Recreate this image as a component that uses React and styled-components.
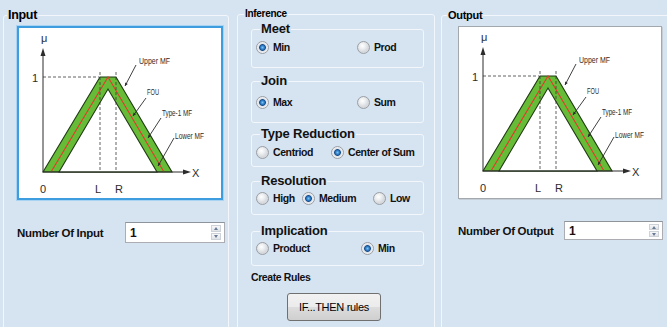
import React from 'react';
import styled, { createGlobalStyle } from 'styled-components';

const GlobalStyle = createGlobalStyle`
  html, body {
    margin: 0;
    padding: 0;
    background: #ffffff;
  }
  body {
    font-family: "Liberation Sans", Arial, sans-serif;
    color: #000;
  }
`;

const Form = styled.div`
  box-sizing: border-box;
  width: 667px;
  height: 327px;
  padding-left: 3px;
  background: #d6e4f2;
  overflow: hidden;
  display: flex;
  align-items: flex-start;
`;

const Group = styled.fieldset`
  box-sizing: border-box;
  flex-shrink: 0;
  width: ${p => p.$w}px;
  height: 400px;
  margin: 7px 0 0 ${p => p.$left || 0}px;
  padding: 0;
  min-width: 0;
  border: 1px solid #f3f7fb;
  border-radius: 3px;
`;

const Legend = styled.legend`
  margin-left: ${p => p.$ml}px;
  padding: 0 1px;
  font-size: ${p => p.$size}px;
  line-height: ${p => p.$lh}px;
  font-weight: bold;
  letter-spacing: -0.3px;
`;

const GroupBody = styled.div`
  padding: ${p => p.$top}px 0 0 ${p => p.$left}px;
  display: flex;
  flex-direction: column;
  align-items: flex-start;
`;

const Picture = styled.div`
  box-sizing: border-box;
  width: ${p => p.$w}px;
  height: ${p => p.$h}px;
  background: #ffffff;
  border: ${p => (p.$focused ? '2px solid #3e9ddf' : '1px solid #a3a8ae')};
  box-shadow: ${p => (p.$focused ? '0 0 0 1px #a9d3f2' : '1px 1px 0 #c4ccd6')};

  svg {
    display: block;
  }
`;

const NumberRow = styled.div`
  display: flex;
  align-items: center;
  margin-top: 22px;
`;

const NumberLabel = styled.span`
  width: ${p => p.$w}px;
  font-size: 11.5px;
  font-weight: bold;
  letter-spacing: -0.3px;
  color: #111;
`;

const Spinner = styled.div`
  box-sizing: border-box;
  width: ${p => p.$w}px;
  height: ${p => p.$h}px;
  display: flex;
  align-items: stretch;
  background: #ffffff;
  border: 1px solid #abadb3;
  border-top-color: #8f949b;
`;

const SpinValue = styled.span`
  flex: 1;
  display: flex;
  align-items: center;
  padding-left: 4px;
  font-size: 12px;
  font-weight: bold;
  color: #1a1010;
`;

const SpinButtons = styled.div`
  width: 10px;
  margin: 2px 3px 2px 0;
  display: flex;
  flex-direction: column;
  gap: 1px;
`;

const SpinButton = styled.span`
  flex: 1;
  display: flex;
  align-items: center;
  justify-content: center;
  background: linear-gradient(#f7f8f9, #dfe3e8);
  border: 1px solid #cdd2d8;

  &::after {
    content: '';
    border-left: 2.5px solid transparent;
    border-right: 2.5px solid transparent;
    ${p => (p.$down ? 'border-top: 3px solid #6a7a95;' : 'border-bottom: 3px solid #6a7a95;')}
  }
`;

const SubGroup = styled.fieldset`
  box-sizing: border-box;
  width: 173px;
  height: ${p => p.$h}px;
  margin: ${p => p.$mt}px 0 0 0;
  padding: 0 0 0 4px;
  min-width: 0;
  border: 1px solid #f3f7fb;
  border-radius: 3px;
`;

const SubLegend = styled.legend`
  margin-left: 4px;
  padding: 0 1px;
  font-size: 13px;
  line-height: 14px;
  font-weight: bold;
  letter-spacing: -0.2px;
  color: #111;
`;

const RadioRow = styled.div`
  display: flex;
  align-items: center;
  height: 18px;
  margin-top: ${p => p.$mt}px;
`;

const RadioItem = styled.label`
  display: flex;
  align-items: center;
  gap: 4px;
  width: ${p => (p.$w ? `${p.$w}px` : 'auto')};
  font-size: 10.5px;
  font-weight: bold;
  letter-spacing: -0.4px;
  color: #111;
`;

const RadioDot = styled.span`
  box-sizing: border-box;
  width: 13px;
  height: 13px;
  border-radius: 50%;
  border: 1px solid #9a9ea3;
  background: ${p =>
    p.$checked
      ? 'radial-gradient(circle, #7cc4f2 0, #2a79c4 2px, #1b4f8a 3px, #dfe3e8 3.8px, #f6f7f9 6px)'
      : 'radial-gradient(circle at 40% 35%, #ffffff 0, #eceef0 3px, #d6d9dd 6px)'};
`;

const Caption = styled.div`
  margin-top: 4px;
  font-size: 10.5px;
  line-height: 14px;
  font-weight: bold;
  letter-spacing: -0.4px;
  color: #111;
`;

const RulesButton = styled.button`
  box-sizing: border-box;
  width: 94px;
  height: 28px;
  margin: 9px 0 0 36px;
  padding: 0;
  border: 1px solid #707070;
  border-radius: 3px;
  background: linear-gradient(#f2f2f2 0%, #ebebeb 50%, #dddddd 50%, #cfcfcf 100%);
  font-family: "Liberation Sans", Arial, sans-serif;
  font-size: 11px;
  letter-spacing: -0.3px;
  color: #000;
`;

const ink = '#2c2c2c';

const Note = ({ x, y, len, children }) => (
  <text x={x} y={y} fontSize="8.5" fill={ink} textLength={len} lengthAdjust="spacingAndGlyphs">
    {children}
  </text>
);

const Pointer = ({ x1, y1, x2, y2 }) => {
  const a = Math.atan2(y2 - y1, x2 - x1);
  const s = 3.5;
  const p1 = `${x2 - s * Math.cos(a - 0.45)},${y2 - s * Math.sin(a - 0.45)}`;
  const p2 = `${x2 - s * Math.cos(a + 0.45)},${y2 - s * Math.sin(a + 0.45)}`;
  return (
    <g>
      <line x1={x1} y1={y1} x2={x2} y2={y2} stroke={ink} strokeWidth="0.9" />
      <polygon points={`${x2},${y2} ${p1} ${p2}`} fill={ink} />
    </g>
  );
};

const MfChart = () => (
  <svg width="202" height="170" viewBox="0 0 202 170" fontFamily='"Liberation Sans", Arial, sans-serif'>
    <polygon points="24,144 81,49 97,49 153,144" fill="#66bb37" stroke="#1f3a12" strokeWidth="1.1" />
    <polygon points="40,144 89,61 138,144" fill="#ffffff" stroke="#1f3a12" strokeWidth="1.1" />
    <polyline points="32,144 89,49 145,144" fill="none" stroke="#e53a2c" strokeWidth="1.1" />

    <g stroke="#3a3a3a" strokeWidth="0.8" strokeDasharray="3 2">
      <line x1="24" y1="49" x2="80" y2="49" />
      <line x1="81" y1="44" x2="81" y2="144" />
      <line x1="97" y1="44" x2="97" y2="144" />
    </g>

    <line x1="24" y1="144" x2="24" y2="27" stroke={ink} strokeWidth="1" />
    <polygon points="24,20 21.5,28 26.5,28" fill={ink} />
    <line x1="24" y1="144" x2="165" y2="144" stroke={ink} strokeWidth="1" />
    <polygon points="172,144 164,141.5 164,146.5" fill={ink} />

    <g fontSize="11" fill={ink}>
      <text x="22" y="14">μ</text>
      <text x="13" y="54">1</text>
      <text x="21" y="165">0</text>
      <text x="76" y="165">L</text>
      <text x="96" y="165">R</text>
      <text x="173" y="149">X</text>
    </g>

    <Note x={120} y={36} len={31}>Upper MF</Note>
    <Pointer x1={117} y1={37} x2={106} y2={58} />
    <Note x={128} y={67} len={12}>FOU</Note>
    <Pointer x1={127} y1={70} x2={114} y2={88} />
    <Note x={143} y={88} len={30}>Type-1 MF</Note>
    <Pointer x1={142} y1={90} x2={129} y2={110} />
    <Note x={156} y={111} len={29}>Lower MF</Note>
    <Pointer x1={155} y1={110} x2={139} y2={138} />
  </svg>
);

const NumberSpinner = ({ w, h }) => (
  <Spinner $w={w} $h={h}>
    <SpinValue>1</SpinValue>
    <SpinButtons>
      <SpinButton />
      <SpinButton $down />
    </SpinButtons>
  </Spinner>
);

const Radio = ({ w, checked, children }) => (
  <RadioItem $w={w}>
    <RadioDot $checked={checked} />
    {children}
  </RadioItem>
);

export default function App() {
  return (
    <>
      <GlobalStyle />
      <Form>
        <Group $w={226}>
          <Legend $ml={3} $size={12.5} $lh={16}>Input</Legend>
          <GroupBody $top={3} $left={13}>
            <Picture $w={206} $h={174} $focused>
              <MfChart />
            </Picture>
            <NumberRow>
              <NumberLabel $w={108}>Number Of Input</NumberLabel>
              <NumberSpinner w={100} h={21} />
            </NumberRow>
          </GroupBody>
        </Group>

        <Group $w={198} $left={8}>
          <Legend $ml={6} $size={10} $lh={14}>Inference</Legend>
          <GroupBody $top={1} $left={13}>
            <SubGroup $h={46} $mt={0}>
              <SubLegend>Meet</SubLegend>
              <RadioRow $mt={2}>
                <Radio w={101} checked>Min</Radio>
                <Radio>Prod</Radio>
              </RadioRow>
            </SubGroup>
            <SubGroup $h={49} $mt={6}>
              <SubLegend>Join</SubLegend>
              <RadioRow $mt={5}>
                <Radio w={101} checked>Max</Radio>
                <Radio>Sum</Radio>
              </RadioRow>
            </SubGroup>
            <SubGroup $h={40} $mt={4}>
              <SubLegend>Type Reduction</SubLegend>
              <RadioRow $mt={2}>
                <Radio w={75}>Centriod</Radio>
                <Radio checked>Center of Sum</Radio>
              </RadioRow>
            </SubGroup>
            <SubGroup $h={41} $mt={7}>
              <SubLegend>Resolution</SubLegend>
              <RadioRow $mt={1}>
                <Radio w={46}>High</Radio>
                <Radio w={71} checked>Medium</Radio>
                <Radio>Low</Radio>
              </RadioRow>
            </SubGroup>
            <SubGroup $h={42} $mt={9}>
              <SubLegend>Implication</SubLegend>
              <RadioRow $mt={1}>
                <Radio w={105}>Product</Radio>
                <Radio checked>Min</Radio>
              </RadioRow>
            </SubGroup>
            <Caption>Create Rules</Caption>
            <RulesButton type="button">IF...THEN rules</RulesButton>
          </GroupBody>
        </Group>

        <Group $w={240} $left={6}>
          <Legend $ml={5} $size={11} $lh={16}>Output</Legend>
          <GroupBody $top={3} $left={16}>
            <Picture $w={204} $h={173}>
              <MfChart />
            </Picture>
            <NumberRow>
              <NumberLabel $w={106}>Number Of Output</NumberLabel>
              <NumberSpinner w={99} h={19} />
            </NumberRow>
          </GroupBody>
        </Group>
      </Form>
    </>
  );
}
